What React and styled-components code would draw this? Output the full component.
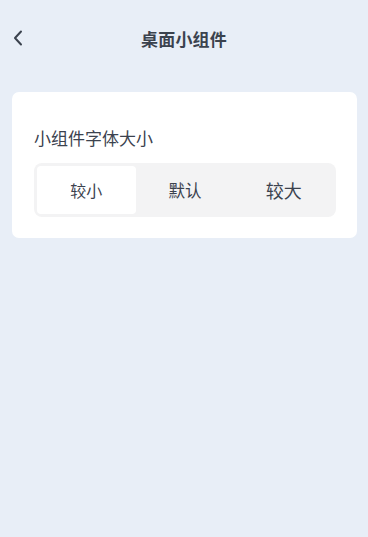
import React, { useState } from "react";
import styled, { createGlobalStyle } from "styled-components";

const GlobalStyle = createGlobalStyle`
  html, body {
    margin: 0;
    padding: 0;
    background: #e8eef7;
    font-family: "Noto Sans CJK SC", "Noto Sans", sans-serif;
    color: #3b424e;
  }
  * {
    box-sizing: border-box;
  }
`;

const Page = styled.div`
  width: 368px;
  min-height: 537px;
  background: #e8eef7;
  padding: 0 11px 0 12px;
`;

const Header = styled.header`
  display: grid;
  grid-template-columns: 40px 1fr 40px;
  align-items: center;
  height: 76px;
  margin: 0 -11px 0 -12px;

  h1 {
    margin: 0;
    text-align: center;
    font-size: 17px;
    font-weight: 700;
    color: #3b424e;
    letter-spacing: 0.2px;
  }
`;

const BackButton = styled.button`
  border: none;
  background: none;
  padding: 0 0 0 13px;
  display: flex;
  align-items: center;
  cursor: pointer;
`;

const Card = styled.section`
  margin-top: 16px;
  background: #fff;
  border-radius: 7px;
  padding: 34px 21px 21px 22px;
`;

const Label = styled.div`
  font-size: 17px;
  line-height: 24px;
  color: #3b424e;
  margin-bottom: 13px;
`;

const Segmented = styled.div`
  display: grid;
  grid-template-columns: repeat(3, 1fr);
  height: 54px;
  padding: 3px;
  background: #f3f3f4;
  border-radius: 8px;
`;

const Segment = styled.div`
  display: flex;
  align-items: center;
  justify-content: center;
  border-radius: 4px;
  cursor: pointer;
  font-size: ${({ $size }) => $size}px;
  color: #3b424e;
  background: ${({ $active }) => ($active ? "#fff" : "transparent")};
`;

const options = [
  { key: "small", label: "较小", size: 16 },
  { key: "default", label: "默认", size: 16.5 },
  { key: "large", label: "较大", size: 18 },
];

export default function App() {
  const [size, setSize] = useState("small");

  return (
    <>
      <GlobalStyle />
      <Page>
        <Header>
          <BackButton aria-label="返回">
            <svg width="12" height="16" viewBox="0 0 12 16" fill="none">
              <path
                d="M8 1.5 L2 8 L8 14.5"
                stroke="#3b424e"
                strokeWidth="2"
                strokeLinecap="round"
                strokeLinejoin="round"
              />
            </svg>
          </BackButton>
          <h1>桌面小组件</h1>
          <span />
        </Header>
        <Card>
          <Label>小组件字体大小</Label>
          <Segmented>
            {options.map((o) => (
              <Segment
                key={o.key}
                $size={o.size}
                $active={size === o.key}
                onClick={() => setSize(o.key)}
              >
                {o.label}
              </Segment>
            ))}
          </Segmented>
        </Card>
      </Page>
    </>
  );
}
